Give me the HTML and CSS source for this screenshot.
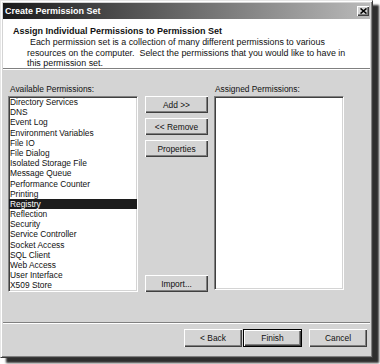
FILE: index.html
```html
<!DOCTYPE html>
<html>
<head>
<meta charset="utf-8">
<title>Create Permission Set</title>
<link rel="stylesheet" href="styles.css">
</head>
<body>
<div class="window">
  <div class="titlebar">
    <span class="title">Create Permission Set</span>
    <span class="close"><svg width="7" height="6" viewBox="0 0 7 6"><path d="M0.5 0.5 L6.5 5.5 M6.5 0.5 L0.5 5.5" stroke="#000" stroke-width="1.6" fill="none"/></svg></span>
  </div>
  <div class="header">
    <div class="h-title">Assign Individual Permissions to Permission Set</div>
    <div class="h-desc">Each permission set is a collection of many different permissions to various<br>resources on the computer.&nbsp; Select the permissions that you would like to have in<br>this permission set.</div>
  </div>
  <div class="content">
    <div class="col">
      <div class="label">Available Permissions:</div>
      <ul class="list">
        <li>Directory Services</li>
        <li>DNS</li>
        <li>Event Log</li>
        <li>Environment Variables</li>
        <li>File IO</li>
        <li>File Dialog</li>
        <li>Isolated Storage File</li>
        <li>Message Queue</li>
        <li>Performance Counter</li>
        <li>Printing</li>
        <li class="sel">Registry</li>
        <li>Reflection</li>
        <li>Security</li>
        <li>Service Controller</li>
        <li>Socket Access</li>
        <li>SQL Client</li>
        <li>Web Access</li>
        <li>User Interface</li>
        <li>X509 Store</li>
      </ul>
    </div>
    <div class="btncol">
      <button class="btn">Add &gt;&gt;</button>
      <button class="btn">&lt;&lt; Remove</button>
      <button class="btn">Properties</button>
      <div class="spacer"></div>
      <button class="btn">Import...</button>
    </div>
    <div class="col">
      <div class="label label-r">Assigned Permissions:</div>
      <ul class="list list-r"></ul>
    </div>
  </div>
  <div class="footer">
    <button class="btn fbtn">&lt; Back</button>
    <button class="btn fbtn default">Finish</button>
    <button class="btn fbtn cancel">Cancel</button>
  </div>
</div>
</body>
</html>
```
FILE: styles.css
```css
* { box-sizing: border-box; }
html, body { margin: 0; padding: 0; }
body {
  width: 380px;
  height: 364px;
  overflow: hidden;
  background: #ffffff;
  font-family: "Liberation Sans", Arial, sans-serif;
  font-size: 8.4px;
  color: #111;
}
.window {
  width: 373px;
  height: 358px;
  background: #d4d4d4;
  border: 1px solid;
  border-color: #e6e6e6 #3a3a3a #3a3a3a #e6e6e6;
  padding: 2px;
  display: flex;
  flex-direction: column;
  box-shadow: inset 1px 1px #ffffff, inset -1px -1px #808080, 6px 5px 2px #2e2e2e;
}
.titlebar {
  height: 16px;
  flex: none;
  display: flex;
  align-items: center;
  padding: 0 1px 0 2px;
  background: linear-gradient(to right, #1a1a1a, #bababa);
  color: #fff;
  font-weight: bold;
  font-size: 9px;
}
.title { flex: 1; }
.close {
  width: 12px;
  height: 10px;
  background: #d4d4d4;
  display: flex;
  align-items: center;
  justify-content: center;
  box-shadow: inset 1px 1px #ffffff, inset -1px -1px #404040, inset -2px -2px #808080;
}
.close svg { display: block; }
.header {
  height: 50px;
  flex: none;
  background: #fff;
  border-bottom: 1px solid #808080;
  padding: 7px 0 0 10px;
}
.h-title {
  font-weight: bold;
  font-size: 9px;
  line-height: 11px;
}
.h-desc {
  margin-left: 14px;
  font-size: 8.9px;
  line-height: 10.6px;
  text-indent: 3px;
  white-space: nowrap;
}
.content {
  flex: 1;
  border-top: 1px solid #fff;
  display: flex;
  align-items: flex-start;
  padding: 14px 0 0 5px;
}
.col { width: 130px; }
.label {
  line-height: 11px;
  padding-left: 2px;
  margin-bottom: 1px;
}
.label-r { padding-left: 1px; }
.list {
  list-style: none;
  margin: 0;
  padding: 0;
  height: 196px;
  background: #fff;
  border: 1px solid;
  border-color: #808080 #ffffff #ffffff #808080;
  box-shadow: inset 1px 1px #404040, inset -1px -1px #d4d4d4;
}
.list-r { margin-top: 1px; height: 194px; }
.list li {
  line-height: 10.2px;
  height: 10.2px;
  padding-left: 1px;
  white-space: nowrap;
}
.list li.sel {
  background: #1c1c1c;
  color: #fff;
}
.btncol {
  width: 63px;
  height: 208px;
  margin: 0 6px 0 7px;
  padding-top: 12px;
  display: flex;
  flex-direction: column;
  gap: 5px;
}
.spacer { flex: 1; }
.btn {
  height: 17px;
  padding: 0;
  margin: 0;
  border: none;
  background: #d4d4d4;
  font-family: "Liberation Sans", Arial, sans-serif;
  font-size: 8.4px;
  color: #111;
  box-shadow: inset 1px 1px #ffffff, inset -1px -1px #404040, inset -2px -2px #808080;
}
.footer {
  flex: none;
  border-top: 1px solid #808080;
  box-shadow: inset 0 1px #ffffff;
  padding: 6px 3px 8px 0;
  display: flex;
  justify-content: flex-end;
}
.fbtn { height: 18px; width: 58px; }
.default {
  width: 59px;
  margin-left: 1px;
  border: 1px solid #000;
}
.cancel { margin-left: 7px; }
```
